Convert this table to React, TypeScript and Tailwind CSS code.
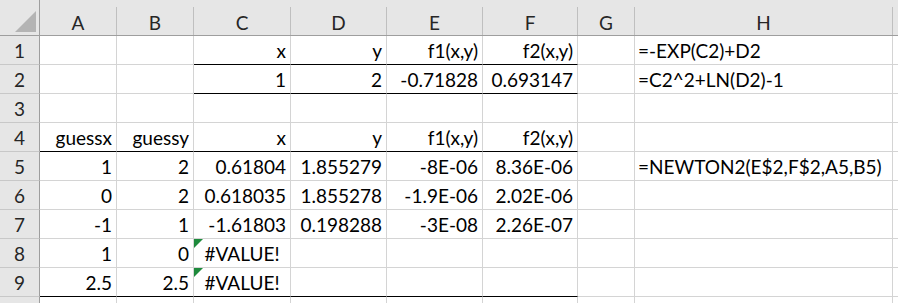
const letters = ['A', 'B', 'C', 'D', 'E', 'F', 'G', 'H']
const widthClass = ['w-[77px]', 'w-[77px]', 'w-[97px]', 'w-[96px]', 'w-[96px]', 'w-[95px]', 'w-[57px]', 'w-[258px]']

type Cell = { v?: string; align?: 'r' | 'l' | 'c'; under?: boolean; err?: boolean }

const r = (v: string, under = false): Cell => ({ v, align: 'r', under })
const u: Cell = { under: true }
const e: Cell = {}

const rows: Cell[][] = [
  [e, e, r('x', true), r('y', true), r('f1(x,y)', true), r('f2(x,y)', true), e, { v: '=-EXP(C2)+D2', align: 'l' }],
  [e, e, r('1', true), r('2', true), r('-0.71828', true), r('0.693147', true), e, { v: '=C2^2+LN(D2)-1', align: 'l' }],
  [e, e, e, e, e, e, e, e],
  [r('guessx', true), r('guessy', true), r('x', true), r('y', true), r('f1(x,y)', true), r('f2(x,y)', true), e, e],
  [r('1'), r('2'), r('0.61804'), r('1.855279'), r('-8E-06'), r('8.36E-06'), e, { v: '=NEWTON2(E$2,F$2,A5,B5)', align: 'l' }],
  [r('0'), r('2'), r('0.618035'), r('1.855278'), r('-1.9E-06'), r('2.02E-06'), e, e],
  [r('-1'), r('1'), r('-1.61803'), r('0.198288'), r('-3E-08'), r('2.26E-07'), e, e],
  [r('1'), r('0'), { v: '#VALUE!', align: 'c', err: true }, e, e, e, e, e],
  [r('2.5', true), r('2.5', true), { v: '#VALUE!', align: 'c', err: true, under: true }, u, u, u, e, e],
  [e, e, e, e, e, e, e, e],
]

function DataCell({ cell, w }: { cell: Cell; w: string }) {
  const justify = cell.align === 'l' ? 'justify-start pl-[3px]' : cell.align === 'c' ? 'justify-center' : 'justify-end pr-[4px]'
  return (
    <div
      className={`relative flex h-full shrink-0 items-end border-r border-b border-r-[#d4d4d4] pb-[3px] ${w} ${justify} ${
        cell.under ? 'border-b-black' : 'border-b-[#d4d4d4]'
      }`}
    >
      {cell.err && (
        <svg className="absolute left-0 top-0" width="9" height="9" viewBox="0 0 9 9">
          <polygon points="0,0 9,0 0,9" fill="#1e8a3c" />
        </svg>
      )}
      {cell.v && <span className="whitespace-nowrap leading-[20px]">{cell.v}</span>}
    </div>
  )
}

export default function App() {
  return (
    <div className="h-[303px] w-[898px] overflow-hidden bg-white text-[19px] text-black" style={{ fontFamily: 'Lato, "Open Sans", sans-serif' }}>
      {/* column headers */}
      <div className="flex h-[36px] border-b border-[#9e9e9e] bg-[#e6e6e6] text-[#262626]">
        <div className="relative h-full w-[40px] shrink-0 border-r border-[#9e9e9e]">
          <svg className="absolute left-[14px] top-[10px]" width="23" height="23" viewBox="0 0 23 23">
            <polygon points="22,1 22,22 1,22" fill="#b4b4b4" />
          </svg>
        </div>
        {letters.map((l, i) => (
          <div key={l} className={`h-full shrink-0 pt-[7px] ${widthClass[i]}`}>
            <div className="flex h-full items-end justify-center border-r border-[#bfbfbf] pb-[2px]">
              <span className="leading-[20px]">{l}</span>
            </div>
          </div>
        ))}
        <div className="flex-1" />
      </div>

      {rows.map((row, ri) => (
        <div key={ri} className="flex h-[29px]">
          <div className="flex h-full w-[40px] shrink-0 items-end justify-center border-r border-b border-r-[#9e9e9e] border-b-[#c8c8c8] bg-[#e6e6e6] pb-[3px] text-[#262626]">
            {ri < 9 && <span className="leading-[20px]">{ri + 1}</span>}
          </div>
          {row.map((cell, ci) => (
            <DataCell key={ci} cell={cell} w={widthClass[ci]} />
          ))}
          <div className="h-full flex-1 border-b border-[#d4d4d4]" />
        </div>
      ))}
    </div>
  )
}
